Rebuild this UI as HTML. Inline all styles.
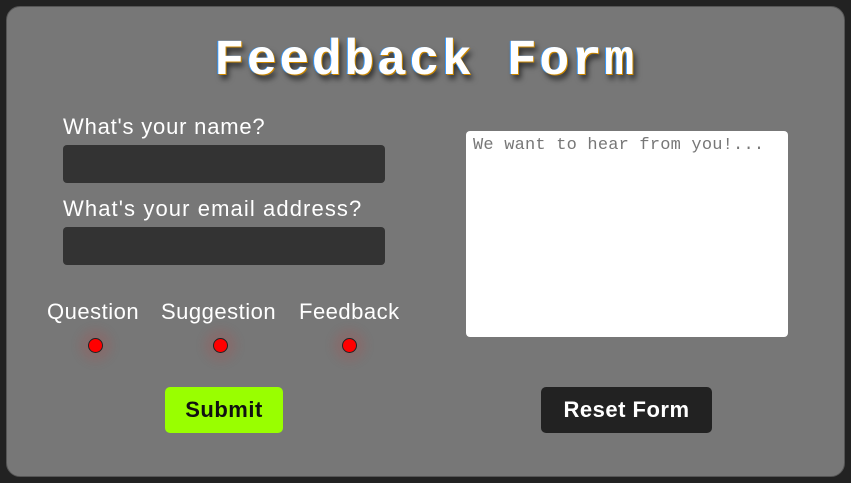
<!DOCTYPE html>
<html><head><style>
html,body{margin:0;padding:0;width:851px;height:483px;background:#222;overflow:hidden}
.card{position:absolute;left:6px;top:6px;width:839px;height:471px;background:#777;border:1px solid #555;border-radius:14px;box-sizing:border-box;font-family:"Liberation Sans",sans-serif;color:#fff}
.title{position:absolute;left:0;width:100%;top:27px;text-align:center;font-family:"Liberation Mono",monospace;font-weight:bold;font-size:50px;letter-spacing:2.5px;line-height:56px;color:#fff;text-shadow:1px 1px 0 #c80,-1px 0 0 #39f,3px 5px 6px rgba(0,0,0,.6)}
.lbl{position:absolute;font-size:22px;line-height:24px;letter-spacing:0.8px}
.inp{position:absolute;left:56px;width:322px;height:38px;background:#333;border-radius:4px}
.ta{position:absolute;left:459px;top:124px;width:322px;height:206px;background:#fff;border-radius:4px;font-family:"Liberation Mono",monospace;font-size:17px;color:#777;padding:5px 7px;box-sizing:border-box;letter-spacing:0.2px}
.dot{position:absolute;width:13px;height:13px;border-radius:50%;background:#f00;border:1.5px solid #222;box-shadow:0 0 10px 8px rgba(200,60,60,.18)}
.btn{position:absolute;font-weight:bold;font-size:22px;border-radius:5px;text-align:center;line-height:46px;height:46px;letter-spacing:0.5px}
</style></head><body>
<div class="card">
<div class="title">Feedback Form</div>
<div class="lbl" style="left:56px;top:108px">What's your name?</div>
<div class="inp" style="top:138px"></div>
<div class="lbl" style="left:56px;top:190px;letter-spacing:1.1px">What's your email address?</div>
<div class="inp" style="top:220px"></div>
<div class="lbl" style="left:40px;top:293px;letter-spacing:0.5px">Question</div>
<div class="lbl" style="left:154px;top:293px;letter-spacing:0.5px">Suggestion</div>
<div class="lbl" style="left:292px;top:293px;letter-spacing:0.5px">Feedback</div>
<div class="dot" style="left:81px;top:331px"></div>
<div class="dot" style="left:206px;top:331px"></div>
<div class="dot" style="left:335px;top:331px"></div>
<div class="ta">We want to hear from you!...</div>
<div class="btn" style="left:158px;top:380px;width:118px;background:#9f0;color:#111">Submit</div>
<div class="btn" style="left:534px;top:380px;width:171px;background:#222;color:#fff">Reset Form</div>
</div>
</body></html>
